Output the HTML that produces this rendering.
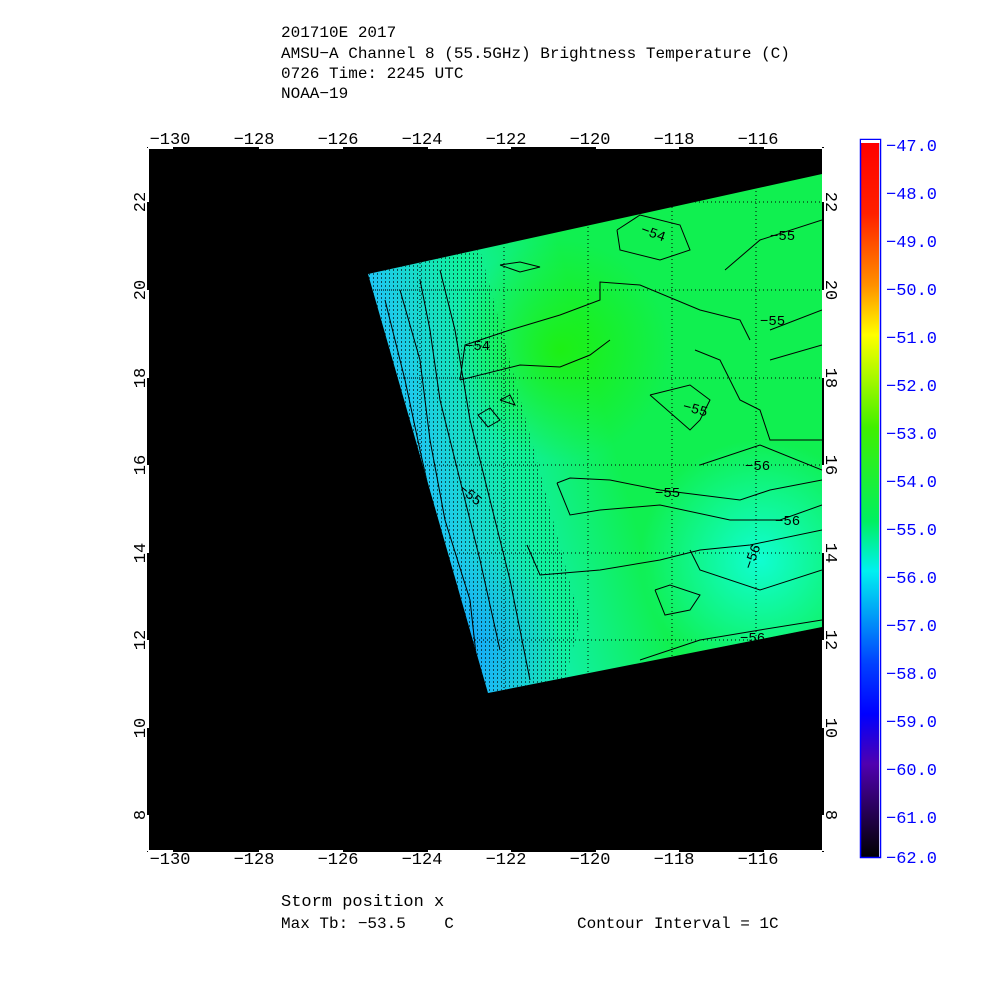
<!DOCTYPE html>
<html><head><meta charset="utf-8"><style>
html,body{margin:0;padding:0;background:#fff;}
body{width:1000px;height:1000px;position:relative;overflow:hidden;font-family:"Liberation Mono",monospace;}
.t{position:absolute;left:281px;font-size:16px;color:#000;line-height:20px;white-space:pre;}
</style></head><body>
<div class="t" style="top:23px">201710E 2017</div>
<div class="t" style="top:44px">AMSU−A Channel 8 (55.5GHz) Brightness Temperature (C)</div>
<div class="t" style="top:64px">0726 Time: 2245 UTC</div>
<div class="t" style="top:84px">NOAA−19</div>
<div class="t" style="top:893px;font-size:17px">Storm position x</div>
<div class="t" style="top:914px">Max Tb: −53.5    C</div>
<div class="t" style="top:914px;left:577px">Contour Interval = 1C</div>

<svg width="1000" height="1000" style="position:absolute;left:0;top:0" font-family="Liberation Mono, monospace">
<defs>
<linearGradient id="g" x1="380" y1="300" x2="560" y2="250" gradientUnits="userSpaceOnUse">
<stop offset="0" stop-color="#1ec8f0"/><stop offset="0.45" stop-color="#10f0a0"/><stop offset="1" stop-color="#10f050"/>
</linearGradient>
<radialGradient id="c1" cx="760" cy="560" r="120" gradientUnits="userSpaceOnUse"><stop offset="0" stop-color="#10ffe0" stop-opacity="0.9"/><stop offset="1" stop-color="#10ffe0" stop-opacity="0"/></radialGradient>
<radialGradient id="c2" cx="560" cy="350" r="110" gradientUnits="userSpaceOnUse"><stop offset="0" stop-color="#20f000" stop-opacity="0.8"/><stop offset="1" stop-color="#20f000" stop-opacity="0"/></radialGradient>
<radialGradient id="c3" cx="470" cy="640" r="90" gradientUnits="userSpaceOnUse"><stop offset="0" stop-color="#10a0f8" stop-opacity="0.7"/><stop offset="1" stop-color="#10a0f8" stop-opacity="0"/></radialGradient>
<linearGradient id="cb" x1="0" y1="0" x2="0" y2="1">
<stop offset="0" stop-color="#ff0000"/><stop offset="0.1" stop-color="#ff2000"/><stop offset="0.2" stop-color="#ff9000"/><stop offset="0.27" stop-color="#ffff00"/><stop offset="0.4" stop-color="#40f000"/><stop offset="0.53" stop-color="#00f060"/><stop offset="0.6" stop-color="#00f0f0"/><stop offset="0.73" stop-color="#0040ff"/><stop offset="0.8" stop-color="#0000ff"/><stop offset="0.87" stop-color="#5000b0"/><stop offset="1" stop-color="#000000"/>
</linearGradient>
<pattern id="dots" width="4" height="4" patternUnits="userSpaceOnUse"><rect x="1" y="1" width="1" height="2" fill="#000"/></pattern>
<clipPath id="sw"><polygon points="368,274 822,174 822,627 488,693"/></clipPath>
</defs>
<rect x="147" y="147" width="677" height="705" fill="#000"/>
<g clip-path="url(#sw)">
<rect x="360" y="170" width="470" height="530" fill="url(#g)"/>
<rect x="360" y="170" width="470" height="530" fill="url(#c1)"/>
<rect x="360" y="170" width="470" height="530" fill="url(#c2)"/>
<rect x="360" y="170" width="470" height="530" fill="url(#c3)"/>
<polygon points="360,270 480,250 580,620 560,700 360,700" fill="url(#dots)" opacity="0.6"/>
<g stroke="#000" stroke-width="1" stroke-dasharray="1,3" fill="none">
<line x1="147" y1="202" x2="824" y2="202"/><line x1="147" y1="290" x2="824" y2="290"/><line x1="147" y1="378" x2="824" y2="378"/><line x1="147" y1="465" x2="824" y2="465"/><line x1="147" y1="553" x2="824" y2="553"/><line x1="147" y1="640" x2="824" y2="640"/>
<line x1="420" y1="147" x2="420" y2="852"/><line x1="504" y1="147" x2="504" y2="852"/><line x1="588" y1="147" x2="588" y2="852"/><line x1="672" y1="147" x2="672" y2="852"/><line x1="756" y1="147" x2="756" y2="852"/>
</g>
<g stroke="#000" stroke-width="1" fill="none">
<polyline points="460,380 465,345 510,330 560,315 600,300 600,282 640,285 700,310 740,320 750,340"/>
<polyline points="460,380 520,365 560,367 590,355 610,340"/>
<polyline points="617,230 640,215 680,225 690,250 660,260 620,250 617,230"/>
<polyline points="725,270 760,240 822,220"/>
<polyline points="770,330 822,310"/>
<polyline points="770,360 822,345"/>
<polyline points="695,350 720,360 740,400 760,410 770,440 822,440"/>
<polyline points="650,395 690,385 710,400 700,420 690,430 650,395"/>
<polyline points="700,465 760,445 822,470"/>
<polyline points="557,483 570,478 610,480 660,490 740,500 770,490 822,480"/>
<polyline points="557,483 570,515 600,510 660,505 730,520 780,520 822,505"/>
<polyline points="527,545 540,575 600,570 660,560 700,550 750,545 822,530"/>
<polyline points="690,550 700,570 760,590 822,570"/>
<polyline points="655,590 665,615 690,610 700,595 670,585 655,590"/>
<polyline points="640,660 700,640 760,630 822,620"/>
<polyline points="500,400 510,395 515,405 500,400"/>
<polyline points="478,415 490,408 500,420 488,427 478,415"/>
<polyline points="500,265 520,262 540,267 520,272 500,265"/>
<polyline points="400,290 420,360 430,440 445,520 470,600 480,690"/>
<polyline points="385,300 405,380 420,450 440,540 455,620 470,690"/>
<polyline points="420,280 430,330 440,400 460,480 480,560 500,650"/>
<polyline points="440,270 455,330 470,420 490,500 510,580 530,680"/>
</g>
<g font-size="14" fill="#000">
<text x="640" y="233" transform="rotate(20 640 233)">−54</text>
<text x="770" y="240">−55</text>
<text x="465" y="350">−54</text>
<text x="760" y="325">−55</text>
<text x="682" y="410" transform="rotate(15 682 410)">−55</text>
<text x="745" y="470">−56</text>
<text x="655" y="497">−55</text>
<text x="775" y="525">−56</text>
<text x="752" y="570" transform="rotate(-70 752 570)">−56</text>
<text x="740" y="642">−56</text>
<text x="458" y="490" transform="rotate(40 458 490)">−55</text>
</g>
</g>
<rect x="822" y="147" width="2" height="705" fill="#000"/>
<rect x="146.5" y="146.5" width="678" height="706" fill="none" stroke="#fff" stroke-width="1"/>
<g stroke="#fff" stroke-width="2">
<line x1="148" y1="148" x2="173" y2="148"/><line x1="259" y1="148" x2="343" y2="148"/><line x1="428" y1="148" x2="511" y2="148"/><line x1="596" y1="148" x2="679" y2="148"/><line x1="764" y1="148" x2="822" y2="148"/>
<line x1="148" y1="851" x2="173" y2="851"/><line x1="259" y1="851" x2="343" y2="851"/><line x1="428" y1="851" x2="511" y2="851"/><line x1="596" y1="851" x2="679" y2="851"/><line x1="764" y1="851" x2="822" y2="851"/>
<line x1="148" y1="148" x2="148" y2="202"/><line x1="148" y1="290" x2="148" y2="378"/><line x1="148" y1="465" x2="148" y2="553"/><line x1="148" y1="640" x2="148" y2="728"/><line x1="148" y1="815" x2="148" y2="851"/>
<line x1="823" y1="148" x2="823" y2="202"/><line x1="823" y1="290" x2="823" y2="378"/><line x1="823" y1="465" x2="823" y2="553"/><line x1="823" y1="640" x2="823" y2="728"/><line x1="823" y1="815" x2="823" y2="851"/>
</g>
<g font-size="17" fill="#000" text-anchor="middle">
<text x="170" y="144">−130</text><text x="254" y="144">−128</text><text x="338" y="144">−126</text><text x="422" y="144">−124</text><text x="506" y="144">−122</text><text x="590" y="144">−120</text><text x="674" y="144">−118</text><text x="758" y="144">−116</text>
<text x="170" y="864">−130</text><text x="254" y="864">−128</text><text x="338" y="864">−126</text><text x="422" y="864">−124</text><text x="506" y="864">−122</text><text x="590" y="864">−120</text><text x="674" y="864">−118</text><text x="758" y="864">−116</text>
<text transform="translate(145 202) rotate(-90)">22</text><text transform="translate(145 290) rotate(-90)">20</text><text transform="translate(145 378) rotate(-90)">18</text><text transform="translate(145 465) rotate(-90)">16</text><text transform="translate(145 553) rotate(-90)">14</text><text transform="translate(145 640) rotate(-90)">12</text><text transform="translate(145 728) rotate(-90)">10</text><text transform="translate(145 815) rotate(-90)">8</text>
<text transform="translate(826 202) rotate(90)">22</text><text transform="translate(826 290) rotate(90)">20</text><text transform="translate(826 378) rotate(90)">18</text><text transform="translate(826 465) rotate(90)">16</text><text transform="translate(826 553) rotate(90)">14</text><text transform="translate(826 640) rotate(90)">12</text><text transform="translate(826 728) rotate(90)">10</text><text transform="translate(826 815) rotate(90)">8</text>
</g>
<rect x="861" y="142" width="18" height="715" fill="url(#cb)"/>
<rect x="860.5" y="139.5" width="20" height="718" fill="none" stroke="#00f" stroke-width="1.5"/>
<rect x="861" y="140" width="19" height="3" fill="#fff"/>
<g font-size="17" fill="#00f">
<text x="886" y="151">−47.0</text><text x="886" y="199">−48.0</text><text x="886" y="247">−49.0</text><text x="886" y="295">−50.0</text><text x="886" y="343">−51.0</text><text x="886" y="391">−52.0</text><text x="886" y="439">−53.0</text><text x="886" y="487">−54.0</text><text x="886" y="535">−55.0</text><text x="886" y="583">−56.0</text><text x="886" y="631">−57.0</text><text x="886" y="679">−58.0</text><text x="886" y="727">−59.0</text><text x="886" y="775">−60.0</text><text x="886" y="823">−61.0</text><text x="886" y="863">−62.0</text>
</g>
</svg>
</body></html>
